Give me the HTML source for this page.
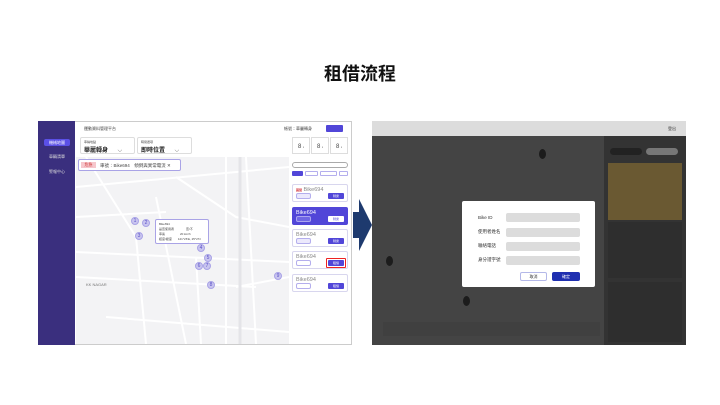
<html><head><style>
*{margin:0;padding:0;box-sizing:border-box}
body{width:720px;height:405px;background:#fff;font-family:"Liberation Sans","Noto Sans CJK TC",sans-serif;position:relative;overflow:hidden}
.a{position:absolute}
.t{font-size:4px;color:#444}
.circ{position:absolute;width:8px;height:8px;border-radius:50%;background:#c9c5ef;border:1px solid #a9a3e6;font-size:5px;color:#5a50c8;text-align:center;line-height:7px}
.card{position:absolute;left:292px;width:56px;height:18px;border:1px solid #d8d6ee;border-radius:2px;background:#fff}
.btn{position:absolute;right:3px;bottom:2px;width:16px;height:6px;background:#5146d8;border-radius:1px;font-size:3px;color:#fff;text-align:center;line-height:6px}
.tag{position:absolute;left:3px;bottom:2px;width:15px;height:6px;border:1px solid #b4aeed;background:#ece9fc;border-radius:2px}
.in{position:absolute;left:506px;width:74px;height:9px;background:#dcdcdc;border-radius:2px}
.lb{position:absolute;left:478px;font-size:4.5px;color:#333}
.ct{position:absolute;left:3px;top:2px;font-size:5.5px;color:#888}
</style></head><body>
<div class="a" style="left:0;width:720px;top:60px;text-align:center;font-size:18px;font-weight:bold;color:#111">租借流程</div>

<div class="a" style="left:38px;top:121px;width:314px;height:224px;border:1px solid #ccc;background:#fff"></div>
<div class="a" style="left:38px;top:121px;width:37px;height:224px;background:#3a2f7e"></div>
<div class="a" style="left:44px;top:139px;width:26px;height:7px;background:#5b50e6;border-radius:2px;font-size:4px;color:#fff;text-align:center;line-height:7px">機械地圖</div>
<div class="a" style="left:44px;top:154px;width:26px;font-size:4px;color:#ddd;text-align:center">車輛清單</div>
<div class="a" style="left:44px;top:169px;width:26px;font-size:4px;color:#ddd;text-align:center">警報中心</div>
<div class="a t" style="left:84px;top:126px">運動資料管理平台</div>
<div class="a t" style="left:284px;top:126px">帳號：華麗轉身</div>
<div class="a" style="left:326px;top:125px;width:17px;height:7px;background:#5146d8;border-radius:1px"></div>
<div class="a" style="left:80px;top:137px;width:55px;height:17px;border:1px solid #ddd;border-radius:2px"><div class="t" style="margin:2px 0 0 3px;font-size:3px">車輛地點</div><div style="margin:1px 0 0 3px;font-size:6px;font-weight:bold;color:#222">華麗轉身 <span style="font-weight:normal;color:#666;margin-left:8px">⌵</span></div></div>
<div class="a" style="left:137px;top:137px;width:55px;height:17px;border:1px solid #ddd;border-radius:2px"><div class="t" style="margin:2px 0 0 3px;font-size:3px">時間選項</div><div style="margin:1px 0 0 3px;font-size:6px;font-weight:bold;color:#222">即時位置 <span style="font-weight:normal;color:#666;margin-left:8px">⌵</span></div></div>
<div class="a" style="left:292px;top:137px;width:18px;height:17px;border:1px solid #ddd;font-size:6px;color:#444;text-align:center;padding-top:6px">8 <span style="font-size:3px">▪</span></div>
<div class="a" style="left:311px;top:137px;width:18px;height:17px;border:1px solid #ddd;font-size:6px;color:#444;text-align:center;padding-top:6px">8 <span style="font-size:3px">▪</span></div>
<div class="a" style="left:330px;top:137px;width:18px;height:17px;border:1px solid #ddd;font-size:6px;color:#444;text-align:center;padding-top:6px">8 <span style="font-size:3px">▪</span></div>
<div class="a" style="left:76px;top:157px;width:213px;height:187px;background:#f3f3f5;overflow:hidden">
<svg width="213" height="187" style="position:absolute;left:0;top:0" stroke="#fff" fill="none" stroke-width="2">
<path d="M0 30 L213 10 M10 0 L60 80 L70 187 M0 95 L213 105 M0 120 L180 130 M80 40 L110 187 M100 20 L160 60 L213 70 M120 100 L125 187 M150 0 L150 187 M30 160 L213 175 M0 60 L90 55 M160 130 L213 120 M170 0 L180 187"/>
<path d="M164 0 L164 187" stroke="#e4e4e8" stroke-width="3"/>
</svg></div>
<div class="a" style="left:78px;top:159px;width:103px;height:12px;border:1px solid #a9a3e6;background:#fff;border-radius:2px">
<div class="a" style="left:2px;top:2px;width:15px;height:6px;background:#f6c7cc;font-size:4px;color:#c33;text-align:center;line-height:6px">危急</div>
<div class="a t" style="left:21px;top:3px;font-size:4.5px">車號：Bike694　傾倒與異常電流 ✕</div></div>
<div class="circ" style="left:131px;top:217px">1</div><div class="circ" style="left:142px;top:219px">2</div><div class="circ" style="left:135px;top:232px">3</div>
<div class="circ" style="left:197px;top:244px">4</div><div class="circ" style="left:204px;top:254px">5</div><div class="circ" style="left:195px;top:262px">6</div><div class="circ" style="left:203px;top:262px">7</div><div class="circ" style="left:207px;top:281px">8</div><div class="circ" style="left:274px;top:272px">9</div>
<div class="a" style="left:155px;top:219px;width:54px;height:25px;border:1px solid #a9a3e6;background:#fff;border-radius:2px;font-size:3px;color:#444;padding:2px 3px;line-height:5px">Bike694<br>是否使用者　　　　否/不<br>車速　　　　　20 km/h<br>經度/緯度　　121°26'E, 25°2'N</div>
<div class="a t" style="left:86px;top:282px;font-size:4px;color:#777">KK NAGAR</div>
<div class="a" style="left:292px;top:162px;width:56px;height:6px;border:1px solid #aaa;border-radius:3px"></div>
<div class="a" style="left:292px;top:171px;width:11px;height:5px;background:#5146d8;border-radius:1px"></div>
<div class="a" style="left:305px;top:171px;width:13px;height:5px;border:1px solid #b4aeed;border-radius:1px"></div>
<div class="a" style="left:320px;top:171px;width:17px;height:5px;border:1px solid #b4aeed;border-radius:1px"></div>
<div class="a" style="left:339px;top:171px;width:9px;height:5px;border:1px solid #b4aeed;border-radius:1px"></div>
<div class="card" style="top:184px"><div class="ct"><span style="background:#f6c7cc;color:#c33;font-size:3px">異常</span> Bike694</div><div class="tag"></div><div class="btn">騎乘</div></div>
<div class="card" style="top:207px;background:#5146d8;border-color:#5146d8"><div class="ct" style="color:#fff">Bike694</div><div class="tag" style="background:#6f66e4;border-color:#aaa4f0"></div><div class="btn" style="background:#fff;color:#5146d8">騎乘</div></div>
<div class="card" style="top:229px"><div class="ct">Bike694</div><div class="tag"></div><div class="btn">騎乘</div></div>
<div class="card" style="top:251px"><div class="ct">Bike694</div><div class="tag" style="background:#fff"></div><div class="btn">租借</div><div class="a" style="right:1px;bottom:0;width:20px;height:10px;border:1px solid #e22;border-radius:1px"></div></div>
<div class="card" style="top:274px"><div class="ct">Bike694</div><div class="tag" style="background:#fff"></div><div class="btn">租借</div></div>

<svg class="a" style="left:350px;top:198px" width="24" height="54"><path d="M3 14 H9 V1 L22 27 L9 53 V40 H3 Z" fill="#1e3a6e"/></svg>

<div class="a" style="left:372px;top:121px;width:314px;height:224px;background:#444"></div>
<div class="a" style="left:372px;top:121px;width:314px;height:15px;background:#dcdcdc"></div>
<div class="a" style="left:668px;top:126px;font-size:4px;color:#333">登出</div>
<div class="a" style="left:604px;top:136px;width:82px;height:209px;background:#333"></div>
<div class="a" style="left:608px;top:163px;width:74px;height:57px;background:#6a5932"></div>
<div class="a" style="left:608px;top:222px;width:74px;height:56px;background:#2e2e2e"></div>
<div class="a" style="left:608px;top:282px;width:74px;height:60px;background:#2e2e2e"></div>
<div class="a" style="left:610px;top:148px;width:32px;height:7px;background:#222;border-radius:4px"></div>
<div class="a" style="left:646px;top:148px;width:32px;height:7px;background:#777;border-radius:4px"></div>
<div class="a" style="left:383px;top:322px;width:217px;height:14px;background:#404040"></div>
<div class="a" style="left:539px;top:149px;width:7px;height:10px;border-radius:50%;background:#1c1c1c"></div>
<div class="a" style="left:386px;top:256px;width:7px;height:10px;border-radius:50%;background:#1c1c1c"></div>
<div class="a" style="left:463px;top:296px;width:7px;height:10px;border-radius:50%;background:#1c1c1c"></div>
<div class="a" style="left:462px;top:201px;width:133px;height:86px;background:#fff;border-radius:2px"></div>
<div class="lb" style="top:215px">Bike ID</div><div class="in" style="top:213px"></div>
<div class="lb" style="top:229px">使用者姓名</div><div class="in" style="top:228px"></div>
<div class="lb" style="top:243px">聯絡電話</div><div class="in" style="top:242px"></div>
<div class="lb" style="top:257px">身分證字號</div><div class="in" style="top:256px"></div>
<div class="a" style="left:520px;top:272px;width:27px;height:9px;border:1px solid #b4b8e8;border-radius:2px;font-size:4px;text-align:center;line-height:8px;color:#333">取消</div>
<div class="a" style="left:552px;top:272px;width:28px;height:9px;background:#1f2fb0;border-radius:2px;font-size:4px;text-align:center;line-height:9px;color:#fff">確定</div>
</body></html>
